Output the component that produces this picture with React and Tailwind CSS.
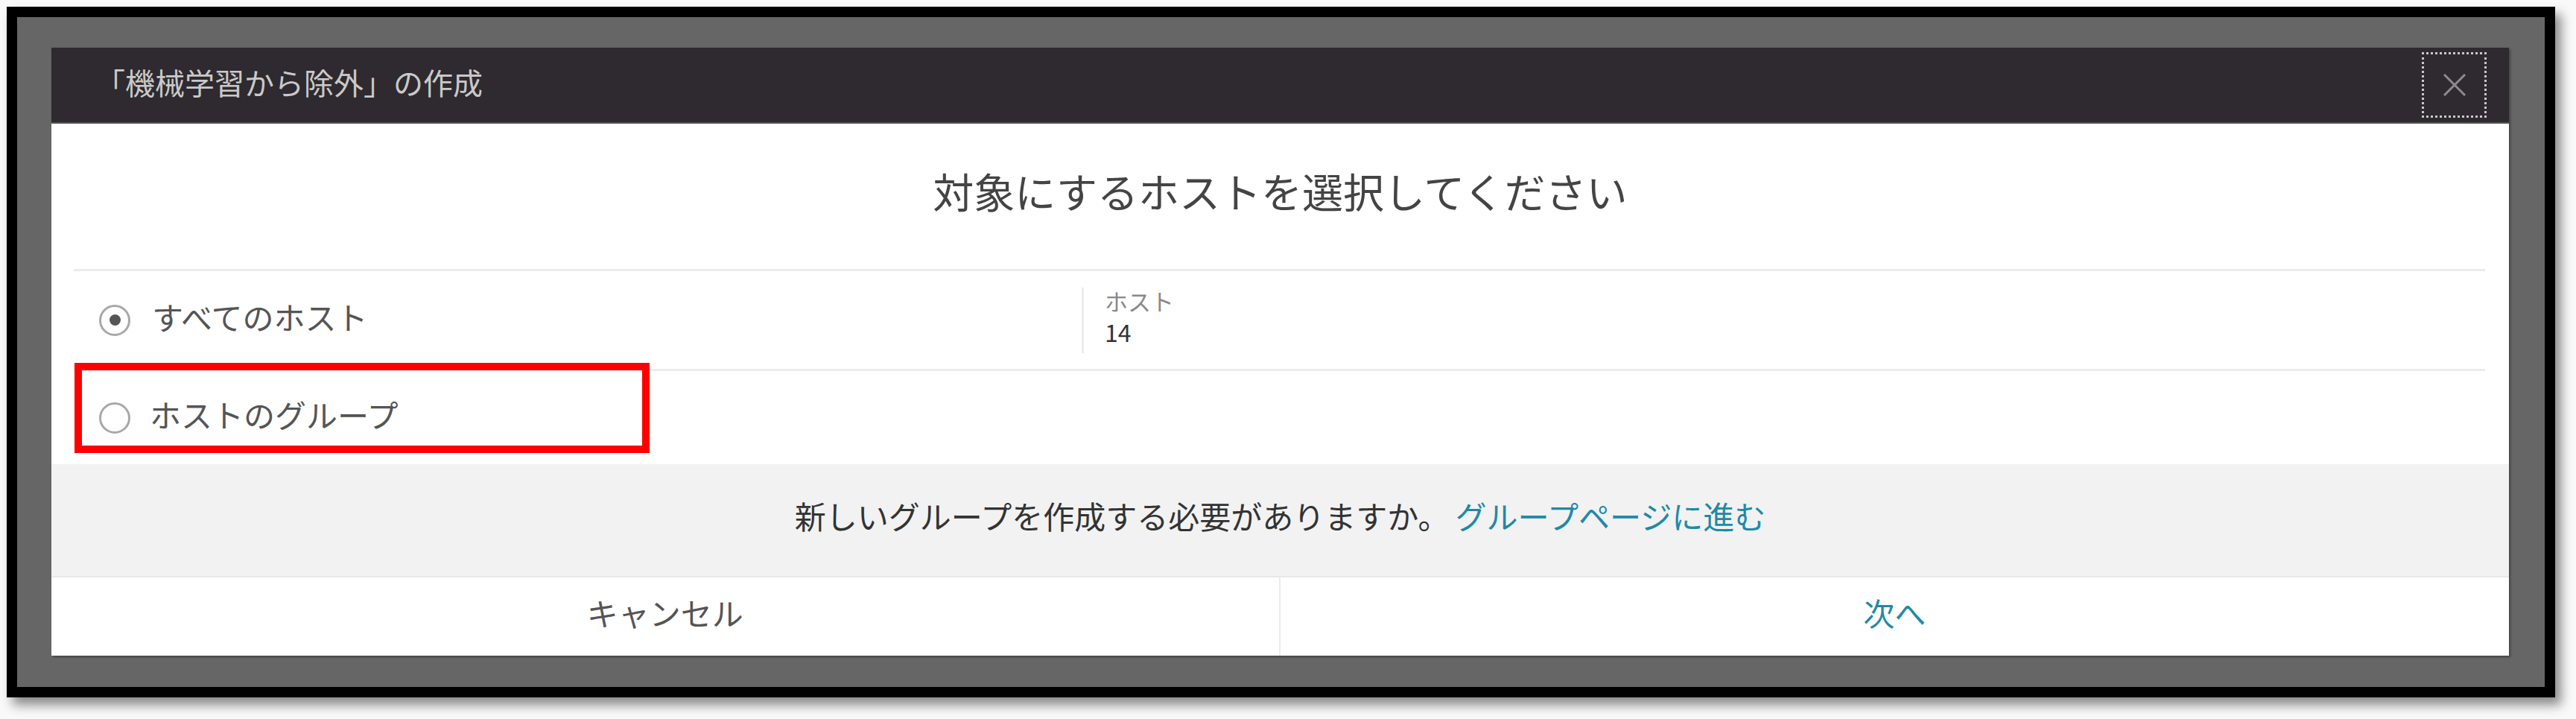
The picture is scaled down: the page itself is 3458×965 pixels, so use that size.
import React, { useState } from "react";

const jp = "font-['Noto_Sans_CJK_JP','Noto_Sans',sans-serif]";

const Radio = ({ checked }) => (
  <span className="w-[42px] h-[42px] rounded-full border-[3px] border-[#a8a8a8] bg-white flex items-center justify-center shrink-0">
    {checked && <span className="w-[15px] h-[15px] rounded-full bg-[#555]" />}
  </span>
);

const CloseIcon = () => (
  <svg width="32" height="30" viewBox="0 0 32 30" fill="none">
    <path d="M2 1 L30 29 M30 1 L2 29" stroke="#8c8c8c" strokeWidth="3" />
  </svg>
);

const App = () => {
  const [target, setTarget] = useState("all");

  return (
    <div className={`w-[3458px] h-[965px] bg-[#f9f9f9] pt-[9px] pl-[9px] ${jp}`}>
      <div className="w-[3421px] h-[927px] border-[14px] border-black bg-[#666666] pt-[41px] pl-[46px] shadow-[8px_10px_14px_rgba(0,0,0,0.45)]">
        <div className="relative w-[3299px] h-[816px] bg-white flex flex-col shadow-[2px_2px_3px_rgba(0,0,0,0.35)]">
          {/* title bar */}
          <div className="h-[102px] bg-[#2e2a2f] flex items-center justify-between pl-[59px] pr-[30px] border-b-2 border-[#555]">
            <span className="text-[40px] leading-none text-[#c9c9c9] pb-[8px]">「機械学習から除外」の作成</span>
            <button className="w-[87px] h-[88px] border-[3px] border-dotted border-[#c8c8c8] flex items-center justify-center">
              <CloseIcon />
            </button>
          </div>

          {/* heading */}
          <div className="h-[195px] flex items-center justify-center pb-[16px]">
            <h2 className="text-[55px] leading-none text-[#444]">対象にするホストを選択してください</h2>
          </div>

          <div className="ml-[30px] mr-[32px] border-t-[3px] border-[#ececec]" />

          {/* all hosts */}
          <div className="h-[131px] flex items-center">
            <label
              className="w-[1383px] flex items-center gap-[29px] pl-[64px] cursor-pointer"
              onClick={() => setTarget("all")}
            >
              <Radio checked={target === "all"} />
              <span className="text-[42px] leading-none text-[#555] pb-[10px]">すべてのホスト</span>
            </label>
            <div className="h-[88px] border-l-[3px] border-[#ececec] pl-[28px] flex flex-col justify-center gap-[10px] pb-[10px]">
              <span className="text-[31px] leading-none text-[#8a8a8a]">ホスト</span>
              <span className="text-[32px] leading-none text-[#333]">14</span>
            </div>
          </div>

          <div className="ml-[30px] mr-[32px] border-t-[3px] border-[#ececec]" />

          {/* host group */}
          <div className="h-[125px] flex items-center">
            <label
              className="flex items-center gap-[26px] pl-[64px] cursor-pointer"
              onClick={() => setTarget("group")}
            >
              <Radio checked={target === "group"} />
              <span className="text-[42px] leading-none text-[#555] pb-[10px]">ホストのグループ</span>
            </label>
          </div>

          {/* info */}
          <div className="h-[150px] bg-[#f2f2f2] flex items-center justify-center pb-[12px]">
            <p className="text-[42px] leading-none text-[#333]">
              新しいグループを作成する必要がありますか。
              <a href="#" className="text-[#1f8aa8] ml-[8px]">グループページに進む</a>
            </p>
          </div>

          {/* buttons */}
          <div className="flex-1 grid grid-cols-2 border-t-2 border-[#e8e8e8]">
            <button className="flex items-center justify-center text-[42px] leading-none text-[#555] border-r-2 border-[#ececec] pb-[12px]">
              キャンセル
            </button>
            <button className="flex items-center justify-center text-[42px] leading-none text-[#1f8aa8] pb-[12px]">
              次へ
            </button>
          </div>

          {/* annotation */}
          <div className="absolute left-[31px] top-[423px] w-[772px] h-[121px] border-[10px] border-[#ff0000] pointer-events-none" />
        </div>
      </div>
    </div>
  );
};

export default App;
